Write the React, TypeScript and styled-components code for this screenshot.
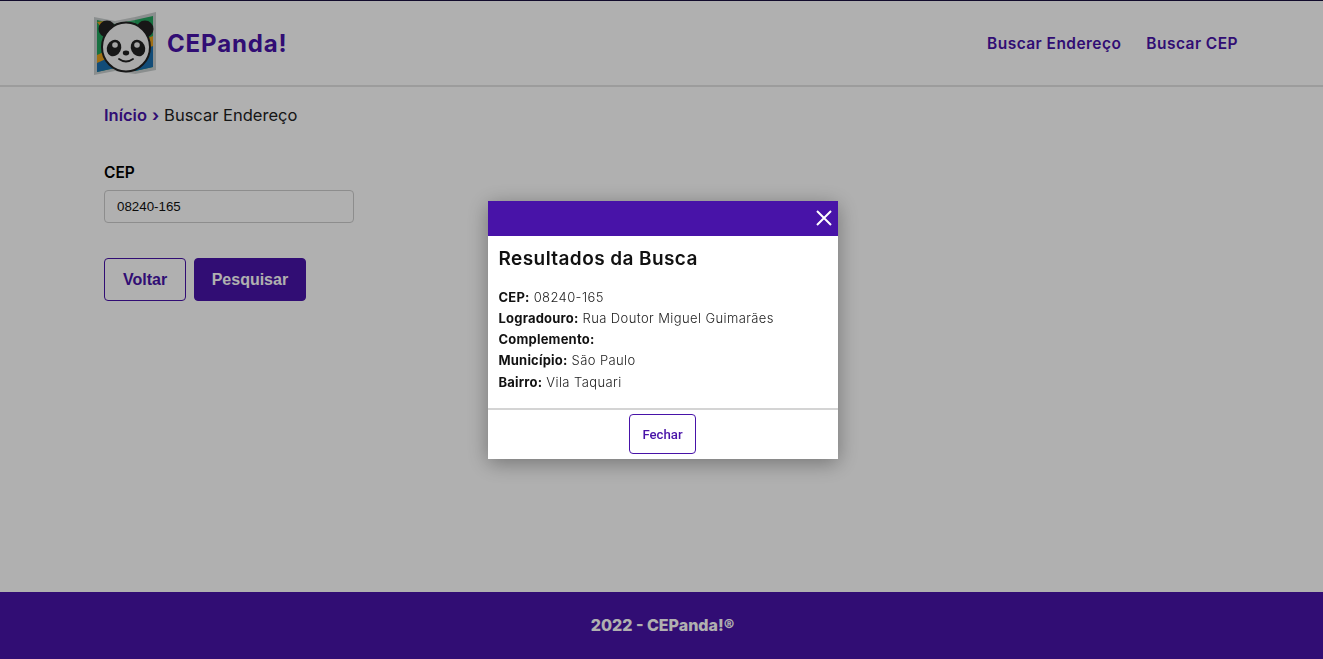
import React from 'react';
import styled, { createGlobalStyle } from 'styled-components';

const purple = '#4813a8';
const sans = '"Inter", "Noto Sans", "Liberation Sans", sans-serif';

const GlobalStyle = createGlobalStyle`
  html, body {
    margin: 0;
    padding: 0;
    height: 100%;
  }
  * {
    box-sizing: border-box;
  }
  body {
    font-family: ${sans};
    color: #000;
    background: #fff;
  }
`;

const Page = styled.div`
  display: flex;
  flex-direction: column;
  height: 659px;
  border-top: 1px solid #1a1040;
`;

const Header = styled.header`
  display: flex;
  align-items: center;
  justify-content: space-between;
  height: 86px;
  padding: 0 85px 0 93px;
  border-bottom: 2px solid #e2e2e2;
`;

const Brand = styled.div`
  display: flex;
  align-items: center;
  gap: 10px;
`;

const BrandName = styled.span`
  color: ${purple};
  font-size: 24px;
  font-weight: 700;
  letter-spacing: 0.85px;
`;

const Nav = styled.nav`
  display: flex;
  gap: 25px;
  margin-top: 1px;
`;

const NavLink = styled.a`
  color: ${purple};
  font-size: 15.5px;
  font-weight: 600;
  letter-spacing: 0.45px;
  text-decoration: none;
`;

const Main = styled.main`
  flex: 1;
  padding: 16px 104px 0;
`;

const Breadcrumb = styled.div`
  display: flex;
  gap: 5px;
  height: 24px;
  align-items: center;
  font-size: 16.5px;
  color: #222;
`;

const Crumb = styled.a`
  color: ${purple};
  font-weight: 600;
  text-decoration: none;
`;

const Chevron = styled.span`
  color: ${purple};
  font-weight: 700;
`;

const FieldLabel = styled.label`
  display: block;
  margin-top: 35px;
  font-size: 15.5px;
  font-weight: 600;
  line-height: 22px;
`;

const Input = styled.input`
  display: block;
  width: 250px;
  height: 33px;
  margin-top: 6px;
  padding: 0 12px;
  border: 1px solid #ccc;
  border-radius: 4px;
  background: #fff;
  color: #111;
  font-family: "Liberation Sans", Arial, sans-serif;
  font-size: 13.33px;
`;

const Actions = styled.div`
  display: flex;
  gap: 8px;
  margin-top: 35px;
`;

const Button = styled.button<{ $solid?: boolean }>`
  height: 43px;
  padding: 0 ${(props) => (props.$solid ? '16.5px' : '18px')};
  border: 1px solid ${purple};
  border-radius: 4px;
  background: ${(props) => (props.$solid ? purple : '#fff')};
  color: ${(props) => (props.$solid ? '#fff' : purple)};
  font-family: "Liberation Sans", Arial, sans-serif;
  font-size: 16px;
  font-weight: 700;
`;

const Footer = styled.footer`
  display: flex;
  align-items: center;
  justify-content: center;
  height: 67px;
  padding: 0 0 2px 2px;
  background: ${purple};
  color: #fff;
  font-size: 16px;
  font-weight: 800;
`;

const Overlay = styled.div`
  position: fixed;
  inset: 0;
  display: flex;
  align-items: center;
  justify-content: center;
  background: rgba(0, 0, 0, 0.31);
`;

const Modal = styled.div`
  display: flex;
  flex-direction: column;
  width: 350px;
  height: 258px;
  margin-left: 2px;
  background: #fff;
  box-shadow: 0 4px 20px rgba(0, 0, 0, 0.35);
`;

const ModalTop = styled.div`
  display: flex;
  align-items: center;
  justify-content: flex-end;
  height: 35px;
  padding-right: 4px;
  background: ${purple};
`;

const CloseIcon = styled.svg`
  width: 18px;
  height: 18px;
  margin-right: 1px;
  margin-top: -1px;
`;

const ModalBody = styled.div`
  flex: 1;
  padding: 10px 11px 0;
`;

const ModalTitle = styled.h2`
  margin: 0 0 16px;
  font-size: 19px;
  font-weight: 600;
  line-height: 25px;
  letter-spacing: 0.42px;
  color: #111;
`;

const Row = styled.div`
  font-size: 13px;
  line-height: 21.3px;
  font-weight: 300;
  letter-spacing: 0.4px;
  color: #222;
`;

const RowKey = styled.strong`
  font-weight: 700;
  letter-spacing: 0.2px;
  color: #111;
`;

const ModalFoot = styled.div`
  display: flex;
  justify-content: center;
  height: 51px;
  padding-top: 4px;
  border-top: 2px solid #d4d4d4;
`;

const CloseButton = styled.button`
  width: 67px;
  height: 40px;
  padding: 2px 0 0;
  border: 1px solid ${purple};
  border-radius: 4px;
  background: #fff;
  color: ${purple};
  font-family: "Roboto", "Liberation Sans", sans-serif;
  font-size: 13.2px;
  font-weight: 500;
`;

const results = [
  ['CEP:', '08240-165'],
  ['Logradouro:', 'Rua Doutor Miguel Guimarães'],
  ['Complemento:', ''],
  ['Município:', 'São Paulo'],
  ['Bairro:', 'Vila Taquari'],
];

const Logo = () => (
  <svg width="64" height="64" viewBox="0 0 64 64" aria-hidden="true">
    <path d="M1 6 L22 10 L42 6 L63 1 V59 L42 63 L22 60 L1 64 Z" fill="#c9cece" />
    <path d="M4 9 L22 13 L42 9 L60 5 V56 L42 60 L22 57 L4 61 Z" fill="#22a45d" />
    <path d="M4 48 L60 30 V56 L42 60 L22 57 L4 61 Z" fill="#1b6fae" />
    <path d="M4 44 L20 37 L24 43 L4 52 Z" fill="#e8a11c" />
    <path d="M4 11 L12 10 L20 18 L12 21 Z" fill="#e8a11c" />
    <path d="M52 28 L60 25 V35 L52 38 Z" fill="#e8a11c" />
    <path d="M22 10 L42 6 V63 L22 60 Z" fill="#fff" opacity="0.1" />
    <circle cx="14" cy="18" r="8.5" fill="#222" />
    <circle cx="52" cy="18" r="8.5" fill="#222" />
    <ellipse cx="33" cy="36" rx="24" ry="24.5" fill="#f6f6f6" stroke="#222" strokeWidth="2" />
    <ellipse cx="21" cy="37" rx="7" ry="8.5" fill="#222" transform="rotate(25 21 37)" />
    <ellipse cx="45" cy="37" rx="7" ry="8.5" fill="#222" transform="rotate(-25 45 37)" />
    <circle cx="22" cy="34" r="2.8" fill="#eee" />
    <circle cx="44" cy="34" r="2.8" fill="#eee" />
    <ellipse cx="33" cy="42" rx="3.2" ry="2.4" fill="#222" />
    <path d="M26 48 Q33 53 40 48" fill="none" stroke="#222" strokeWidth="1.8" strokeLinecap="round" />
  </svg>
);

const App: React.FC = () => {
  return (
    <>
      <GlobalStyle />
      <Page>
        <Header>
          <Brand>
            <Logo />
            <BrandName>CEPanda!</BrandName>
          </Brand>
          <Nav>
            <NavLink href="#">Buscar Endereço</NavLink>
            <NavLink href="#">Buscar CEP</NavLink>
          </Nav>
        </Header>
        <Main>
          <Breadcrumb>
            <Crumb href="#">Início</Crumb>
            <Chevron>›</Chevron>
            <span>Buscar Endereço</span>
          </Breadcrumb>
          <FieldLabel htmlFor="cep">CEP</FieldLabel>
          <Input id="cep" defaultValue="08240-165" />
          <Actions>
            <Button>Voltar</Button>
            <Button $solid>Pesquisar</Button>
          </Actions>
        </Main>
        <Footer>2022 - CEPanda!®</Footer>
      </Page>
      <Overlay>
        <Modal>
          <ModalTop>
            <CloseIcon viewBox="0 0 18 18">
              <path d="M2 2 L16 16 M16 2 L2 16" stroke="#fff" strokeWidth="2" fill="none" />
            </CloseIcon>
          </ModalTop>
          <ModalBody>
            <ModalTitle>Resultados da Busca</ModalTitle>
            {results.map(([key, value]) => (
              <Row key={key}>
                <RowKey>{key}</RowKey> {value}
              </Row>
            ))}
          </ModalBody>
          <ModalFoot>
            <CloseButton>Fechar</CloseButton>
          </ModalFoot>
        </Modal>
      </Overlay>
    </>
  );
};

export default App;
